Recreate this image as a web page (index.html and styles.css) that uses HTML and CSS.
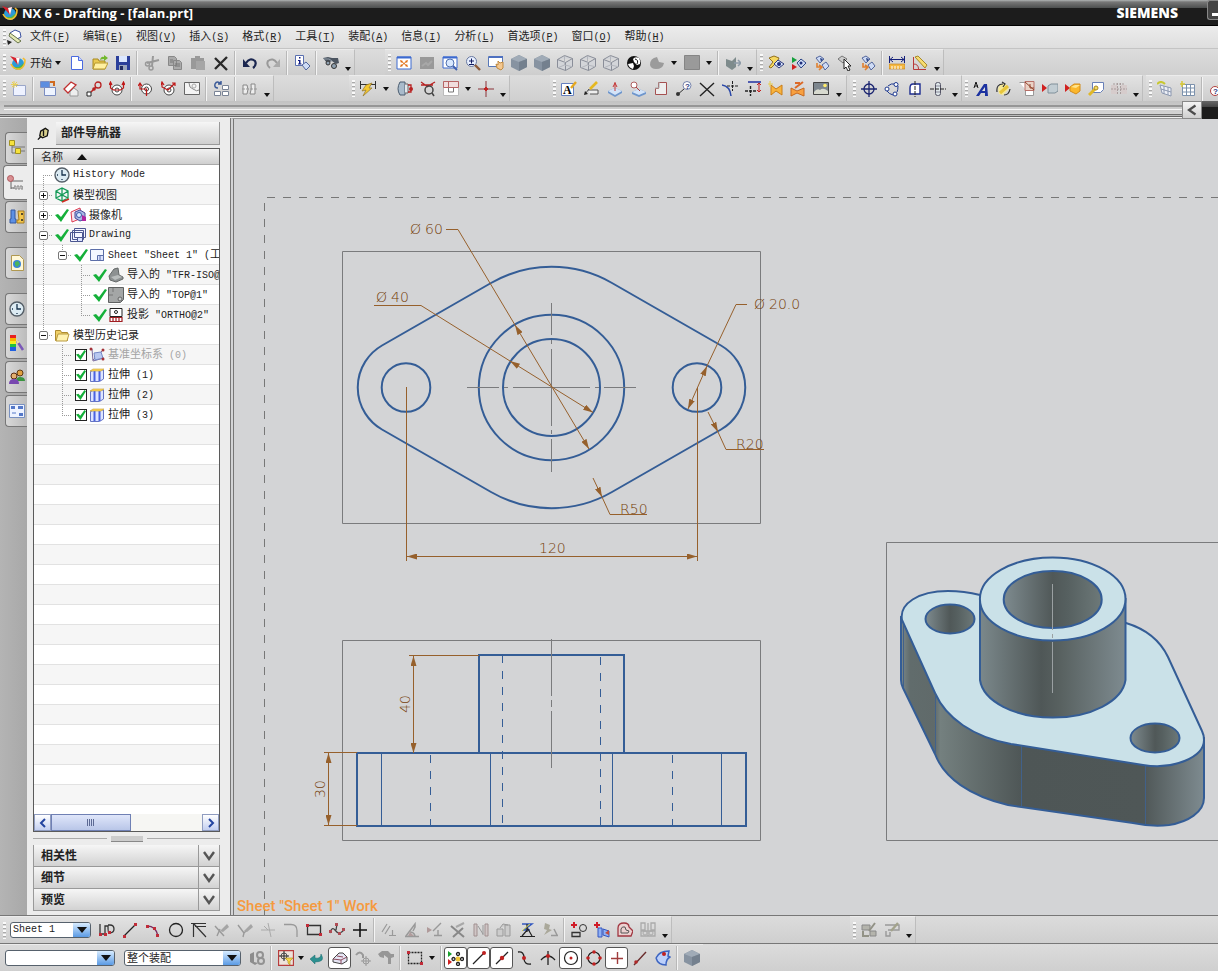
FILE: index.html
```html
<!DOCTYPE html>
<html lang="zh-CN">
<head>
    <meta charset="UTF-8">
    <meta name="viewport" content="width=device-width, initial-scale=1.0">
    <title>NX 6 - Drafting - [falan.prt]</title>
    <link rel="stylesheet" href="styles.css">
</head>
<body>
    <svg class="defs" aria-hidden="true">
        <symbol id="nx" viewBox="0 0 16 16"><circle cx="8" cy="9" r="6" fill="#2c9bd8"/><path d="M3 12q4 4 9 1l2-5-5 4z" fill="#52b848"/><path d="M1 9q3 6 9 5 5-2 5-9l-2-2" fill="none" stroke="#f4bd2c" stroke-width="1.600"/><path d="M0 1l6 2 4-1-2 8z" fill="#d8202c"/><path d="M6 3l4-1-2 8z" fill="#fff"/></symbol>
        <symbol id="cube" viewBox="0 0 16 16"><path d="M0 4l8-4 8 4v8l-8 4-8-4z" fill="#8793a1"/><path d="M0 4l8-4 8 4-8 3z" fill="#a0abb7"/><path d="M8 7l8-3v8l-8 4z" fill="#74808e"/></symbol>
        <symbol id="wire" viewBox="0 0 16 16"><path d="M.5 4.500l7-4 8 3v8l-7 4-8-3zM.5 4.500l8 3 7-4M8.500 7.500v8" fill="#d3d5d9" stroke="#8a8e99"/><path d="M7.500 1v9l-6 2.500M7.500 10l7 1.500" fill="none" stroke="#b3b6bd"/></symbol>
        <symbol id="check" viewBox="0 0 16 16"><path d="M1 8l3-1 3 3 6-8 2 1-8 12z" fill="#15b03a"/></symbol>
        <symbol id="clock" viewBox="0 0 16 16"><circle cx="8" cy="8" r="7" fill="#dcebf3" stroke="#555f68" stroke-width="1.400"/><path d="M8 3v5h4M8 13v-1M3 8h1" fill="none" stroke="#16324c" stroke-width="1.300"/></symbol>
        <symbol id="extrude" viewBox="0 0 16 16"><path d="M1.500 4.500l4-1.500h9v9l-4 2.500h-9z" fill="#dfe5ff" stroke="#6474c4"/><path d="M5.500 4v10M10.500 4v10" stroke="#4a62e0" stroke-width="2"/><path d="M1 4l3-2h11l-3 2z" fill="#ffd95a" stroke="#c8a030" stroke-width=".6"/></symbol>
        <symbol id="gems" viewBox="0 0 16 16"><path d="M2 3l4-2 4 3-4 4zM8 10l4-3 3 4-4 4z" fill="#cfdcf6" stroke="#53669c"/><path d="M6 3l3 1-2 3z" fill="#2b4486"/><path d="M3 8v4h4M5 10l3 2-3 3" fill="none" stroke="#e08030" stroke-width="1.600"/></symbol>
    </svg>

    <header class="titlebar">
        <svg class="icon" viewBox="0 0 16 16"><use href="#nx"/></svg>
        <h1>NX 6 - Drafting - [falan.prt]</h1>
        <span class="brand">SIEMENS</span>
        <button class="minimize" aria-label="最小化"></button>
    </header>

    <nav class="menubar">
        <span class="grip"></span>
        <svg class="icon" viewBox="0 0 16 16"><path d="M3 4l5-3 5 2 1 5-4 2-5-1z" fill="#fff" stroke="#3a50a0"/><path d="M3 4l11 8-3 2-9-7z" fill="#e4e9b4" stroke="#68744a"/><path d="M0 11l5 2-4 3z" fill="#222"/></svg>
        <button>文件<span class="latin">(<u>F</u>)</span></button>
        <button>编辑<span class="latin">(<u>E</u>)</span></button>
        <button>视图<span class="latin">(<u>V</u>)</span></button>
        <button>插入<span class="latin">(<u>S</u>)</span></button>
        <button>格式<span class="latin">(<u>R</u>)</span></button>
        <button>工具<span class="latin">(<u>T</u>)</span></button>
        <button>装配<span class="latin">(<u>A</u>)</span></button>
        <button>信息<span class="latin">(<u>I</u>)</span></button>
        <button>分析<span class="latin">(<u>L</u>)</span></button>
        <button>首选项<span class="latin">(<u>P</u>)</span></button>
        <button>窗口<span class="latin">(<u>O</u>)</span></button>
        <button>帮助<span class="latin">(<u>H</u>)</span></button>
    </nav>

    <div class="toolrow">
        <div class="toolbar">
            <span class="grip"></span>
            <button class="start"><svg class="icon" viewBox="0 0 16 16"><use href="#nx"/></svg>开始<i class="caret"></i></button>
            <button class="tool" aria-label="新建"><svg class="icon" viewBox="0 0 16 16"><path d="M2.500 1.500h7l4 4v9h-11z" fill="#fff" stroke="#4a6ae0"/><path d="M9.500 1.500v4h4" fill="#cdd8ff" stroke="#4a6ae0"/></svg></button>
            <button class="tool" aria-label="打开"><svg class="icon" viewBox="0 0 16 16"><path d="M1 14V4h5l1 2h6v8z" fill="#e8c850" stroke="#a88a20"/><path d="M3 8h13l-3 6H1z" fill="#fff0a0" stroke="#b89a30"/><path d="M8 5q1-4 4-3V0l4 3-4 3V4q-2 0-4 1" fill="#72b82c"/></svg></button>
            <button class="tool" aria-label="保存"><svg class="icon" viewBox="0 0 16 16"><path d="M1 1h14v14H1z" fill="#2b3f9a"/><path d="M4 1h8v6H4z" fill="#dce8ff"/><path d="M4 10h8v5H4z" fill="#9ba6bd"/><path d="M5 11h3v4H5z" fill="#222c60"/></svg></button>
            <span class="sep"></span>
            <button class="tool" aria-label="剪切"><svg class="icon" viewBox="0 0 16 16"><path d="M9 1L8 11M3 8l12-3" stroke="#999" stroke-width="2"/><circle cx="3.500" cy="9" r="2" fill="none" stroke="#999" stroke-width="1.500"/><circle cx="7" cy="13" r="2" fill="none" stroke="#999" stroke-width="1.500"/></svg></button>
            <button class="tool" aria-label="复制"><svg class="icon" viewBox="0 0 16 16"><path d="M1.500 1.500h6l2 2v7h-8zM6.500 5.500h6l2 2v7h-8z" fill="#aaa" stroke="#888"/><path d="M8 9h5M8 11h5M3 5h3M3 7h3" stroke="#777"/></svg></button>
            <button class="tool" aria-label="粘贴"><svg class="icon" viewBox="0 0 16 16"><path d="M1 3h13v11H1zM5 1h5v3H5z" fill="#999"/><path d="M6 6h9v9H6z" fill="#a6a6a6"/></svg></button>
            <button class="tool" aria-label="删除"><svg class="icon" viewBox="0 0 16 16"><path d="M2 3l12 12M14 2L2 14" stroke="#2a2a2a" stroke-width="2.400"/></svg></button>
            <span class="sep"></span>
            <button class="tool" aria-label="撤销"><svg class="icon" viewBox="0 0 16 16"><path d="M4 8q4-6 9-2 2 4-2 7" fill="none" stroke="#1b2750" stroke-width="2.200"/><path d="M1 4v8h7z" fill="#1b2750"/></svg></button>
            <button class="tool" aria-label="重做"><svg class="icon" viewBox="0 0 16 16"><path d="M12 8Q8 2 3 6q-2 4 2 7" fill="none" stroke="#999" stroke-width="2"/><path d="M15 4v8H8z" fill="#aaa"/></svg></button>
            <span class="sep"></span>
            <button class="tool" aria-label="信息"><svg class="icon" viewBox="0 0 16 16"><path d="M1.500.5h8v10h-8z" fill="#fff" stroke="#5a70b0"/><path d="M5 2h1.500v1.500H5zM4 5h2.500v3.500h1v1H4v-1h1V6H4z" fill="#111a80"/><path d="M8 10l4-3 4 4-4 4z" fill="#cfdcf6" stroke="#53669c"/></svg></button>
            <span class="sep"></span>
            <button class="tool" aria-label="查找"><svg class="icon" viewBox="0 0 16 16"><path d="M0 3l5-1 4 1 6 0 1 5-3 1-4-3-5 2z" fill="#4c5561"/><path d="M1 4l5 0 3 2" fill="none" stroke="#93a0ac"/><circle cx="5" cy="8" r="2" fill="#8fa0b0" stroke="#333"/><circle cx="11" cy="11" r="2.500" fill="#8fa0b0" stroke="#333"/></svg></button>
            <button class="drop more" aria-label="更多"></button>
        </div>
        <div class="toolbar gap-m">
            <span class="grip"></span>
            <button class="tool" aria-label="适合窗口"><svg class="icon" viewBox="0 0 16 16"><path d="M1 2h14v12H1z" fill="#fff" stroke="#3c6ad0"/><path d="M1 1.500h14v2H1z" fill="#3c6ad0"/><path d="M4 5l3 1-2 2zM12 5l-3 1 2 2zM4 12l3-1-2-2zM12 12l-3-1 2-2z" fill="#e06c10"/><path d="M5 6l6 5M11 6l-6 5" stroke="#e06c10"/></svg></button>
            <button class="tool" aria-label="缩放选定"><svg class="icon" viewBox="0 0 16 16"><path d="M1 2h14v12H1z" fill="#999"/><path d="M3 11l4-3 2 2 4-4" stroke="#a8a8a8" fill="none" stroke-width="2"/></svg></button>
            <button class="tool" aria-label="缩放窗口"><svg class="icon" viewBox="0 0 16 16"><path d="M1 2h14v11H1z" fill="#fff" stroke="#3c6ad0"/><path d="M1 1.500h14v2H1z" fill="#3c6ad0"/><circle cx="8" cy="8" r="4" fill="#d8e8ff" stroke="#5070b0"/><path d="M11 11l4 4" stroke="#4060b0" stroke-width="2"/></svg></button>
            <button class="tool" aria-label="放大缩小"><svg class="icon" viewBox="0 0 16 16"><circle cx="6.500" cy="6.500" r="5" fill="#e8f0ff" stroke="#6878a0"/><path d="M4 6h5M6.500 3.500v5M4 9.500h5" stroke="#101a60"/><path d="M10 10l5 5" stroke="#8c5a3a" stroke-width="2.400"/></svg></button>
            <button class="tool" aria-label="平移"><svg class="icon" viewBox="0 0 16 16"><path d="M.5 1.500h14v10H.5z" fill="#fff" stroke="#5878b8"/><path d="M1 1h14v2H1z" fill="#4e70c0"/><path d="M8 9l2 1V6l2 2 3-1v6l-2 2-4-2z" fill="#f4c890" stroke="#c08a40"/></svg></button>
            <button class="tool" aria-label="带边着色"><svg class="icon" viewBox="0 0 16 16"><use href="#cube"/></svg></button>
            <button class="tool" aria-label="着色"><svg class="icon" viewBox="0 0 16 16"><use href="#cube"/></svg></button>
            <button class="tool" aria-label="线框"><svg class="icon" viewBox="0 0 16 16"><use href="#wire"/></svg></button>
            <button class="tool" aria-label="隐藏边"><svg class="icon" viewBox="0 0 16 16"><use href="#wire"/></svg></button>
            <button class="tool" aria-label="静态线框"><svg class="icon" viewBox="0 0 16 16"><use href="#wire"/></svg></button>
            <button class="tool" aria-label="面分析"><svg class="icon" viewBox="0 0 16 16"><circle cx="8" cy="8" r="7" fill="#111"/><path d="M7 4q2-3 6-1 2 3 1 6l-3 1-3-3zM2 9l5-1 1 3-1 3q-4-1-5-5" fill="#fff"/><path d="M9 4q4 1 2 5" fill="none" stroke="#111"/></svg></button>
            <button class="tool" aria-label="局部着色"><svg class="icon" viewBox="0 0 16 16"><path d="M1 10q0-7 7-8l2 5 5 1q-1 6-8 6-5 0-6-4" fill="#9b9b9b"/></svg></button>
            <button class="drop" aria-label="展开"></button>
            <button class="tool" aria-label="背景"><svg class="icon" viewBox="0 0 16 16"><path d="M.5.500h15v14H.5z" fill="#9a9a9a" stroke="#858585"/></svg></button>
            <button class="drop" aria-label="展开"></button>
            <span class="sep"></span>
            <button class="tool" aria-label="剪切截面"><svg class="icon" viewBox="0 0 16 16"><path d="M1 4l6 2 4-4v10l-4 3-6-4z" fill="#7e8b8c"/><path d="M9 8h6M13 5l3 3-3 3" fill="none" stroke="#8d9ba8" stroke-width="1.500"/></svg></button>
            <button class="drop more" aria-label="更多"></button>
        </div>
        <div class="toolbar">
            <span class="grip"></span>
            <button class="tool" aria-label="显示"><svg class="icon" viewBox="0 0 16 16"><path d="M1 3l5-2 5 2-2 4-6 6-2-1 4-5z" fill="#f6d860" stroke="#92701c"/><path d="M6 9l4-4 6 4-5 4z" fill="#dce8ff" stroke="#2c3878"/><circle cx="11" cy="9" r="2" fill="#20307c"/></svg></button>
            <button class="tool" aria-label="显示和隐藏"><svg class="icon" viewBox="0 0 16 16"><path d="M1 2l5 3-5 3z" fill="#14a03c"/><path d="M1 9l5 3-5 3z" fill="#d02020"/><path d="M6 8l4-4 5 4-5 5z" fill="#cfdcf6" stroke="#2b4486"/><circle cx="10" cy="8" r="1.500" fill="#20307c"/></svg></button>
            <button class="tool" aria-label="隐藏"><svg class="icon" viewBox="0 0 16 16"><use href="#gems"/></svg></button>
            <button class="tool" aria-label="选择对象"><svg class="icon" viewBox="0 0 16 16"><path d="M1 4l4-3 5 3-4 4z" fill="#ccc" stroke="#777"/><path d="M7 4v10l2-2 2 4 2-1-2-4h3z" fill="#fff" stroke="#222"/></svg></button>
            <button class="tool" aria-label="反转显示"><svg class="icon" viewBox="0 0 16 16"><use href="#gems"/></svg></button>
            <span class="sep"></span>
            <button class="tool" aria-label="测量距离"><svg class="icon" viewBox="0 0 16 16"><path d="M.5 1v7M15.500 1v7M1 4.500h14M4 2L1 4.500 4 7M12 2l3 2.500L12 7" fill="none" stroke="#15207a"/><path d="M0 9h16v5H0z" fill="#f5b840" stroke="#b87818" stroke-width=".6"/><path d="M3 11v3M6 11v3M9 11v3M12 11v3" stroke="#fff"/></svg></button>
            <button class="tool" aria-label="测量角度"><svg class="icon" viewBox="0 0 16 16"><path d="M1.500 2v12.500H14M1.500 9q5 0 5 5" fill="none" stroke="#b83a3a"/><path d="M3 2l3-1 9 9-2 3z" fill="#f7dc70" stroke="#a88a28"/></svg></button>
            <button class="drop more" aria-label="更多"></button>
        </div>
    </div>

    <div class="toolrow">
        <div class="toolbar">
            <span class="grip"></span>
            <button class="tool" aria-label="新建图纸页"><svg class="icon" viewBox="0 0 16 16"><path d="M2.500 4.500h12v10h-12z" fill="#eef2ff" stroke="#9aa6c8"/><path d="M3 0v7M0 3.500h7M1 1l5 5M6 1L1 6" stroke="#e8cf58"/></svg></button>
            <span class="sep"></span>
            <button class="tool" aria-label="基本视图"><svg class="icon" viewBox="0 0 16 16"><path d="M.5.500h9v6h-9z" fill="#5d8ee0" stroke="#8090c0"/><path d="M10 1h4v4" fill="none" stroke="#d06a20" stroke-width="2"/><path d="M4.500 6.500h11v8h-11z" fill="#eef4ff" stroke="#7a8cc0"/></svg></button>
            <button class="tool" aria-label="投影视图"><svg class="icon" viewBox="0 0 16 16"><path d="M1 8l7-7 5 3-8 8z" fill="#fff" stroke="#c03030" stroke-width="1.300"/><path d="M7 11l4-4 4 3v5H7z" fill="#eee" stroke="#999"/></svg></button>
            <button class="tool" aria-label="局部放大图"><svg class="icon" viewBox="0 0 16 16"><circle cx="12" cy="4" r="3" fill="none" stroke="#b82020" stroke-width="1.300"/><path d="M10 6l-5 5" stroke="#b82020" stroke-width="1.500"/><circle cx="8" cy="8" r="1.800" fill="#b82020"/><path d="M1 11h4v4H1z" fill="#fff" stroke="#222"/></svg></button>
            <button class="tool" aria-label="剖视图"><svg class="icon" viewBox="0 0 16 16"><circle cx="8" cy="9" r="5" fill="#fff" stroke="#444"/><circle cx="8" cy="9" r="2" fill="none" stroke="#444"/><path d="M1.500 2v5l3 2h7l3-2V2M0 4l1.500-3L3 4M13 4l1.500-3L16 4" fill="none" stroke="#c01818" stroke-width="1.200"/></svg></button>
            <span class="sep"></span>
            <button class="tool" aria-label="半剖视图"><svg class="icon" viewBox="0 0 16 16"><circle cx="8.500" cy="8" r="5" fill="#fff" stroke="#444"/><circle cx="8.500" cy="8" r="2" fill="none" stroke="#444"/><path d="M2 2v6h6.500v7M0 5l2-3 2 3" fill="none" stroke="#c01818" stroke-width="1.200"/></svg></button>
            <button class="tool" aria-label="旋转剖视图"><svg class="icon" viewBox="0 0 16 16"><circle cx="8" cy="9" r="5" fill="#fff" stroke="#444"/><circle cx="8" cy="9" r="2" fill="none" stroke="#444"/><path d="M1 2v4l6 3 7-7M11 2h3v3M0 4l1-3 2 3" fill="none" stroke="#c01818" stroke-width="1.200"/></svg></button>
            <button class="tool" aria-label="局部剖视图"><svg class="icon" viewBox="0 0 16 16"><path d="M.5 1.500h15v12H.5z" fill="#f4f4f4" stroke="#666"/><path d="M5 2q0 5 4 6 4 3 6 1" fill="none" stroke="#888"/><circle cx="10" cy="5" r="2" fill="none" stroke="#aaa"/></svg></button>
            <span class="sep"></span>
            <button class="tool" aria-label="更新视图"><svg class="icon" viewBox="0 0 16 16"><path d="M8 3q-4-4-6 0-1 4 3 4M8 0v3H5" fill="none" stroke="#3b5a98" stroke-width="1.500"/><path d="M9.500 4.500h6v4h-6zM1.500 10.500h6v4h-6zM9.500 10.500h6v4h-6z" fill="#fff" stroke="#7a8496"/></svg></button>
            <span class="sep"></span>
            <button class="tool" aria-label="断开视图"><svg class="icon" viewBox="0 0 16 16"><path d="M1 4h4q2 4 0 9H1zM9 3h4v10H8q2-5 1-10" fill="#eee" stroke="#888"/><path d="M0 8h16" stroke="#999" stroke-dasharray="3 1"/></svg></button>
            <button class="drop more" aria-label="更多"></button>
        </div>
        <div class="toolbar gap-l">
            <span class="grip"></span>
            <button class="tool" aria-label="自动判断尺寸"><svg class="icon" viewBox="0 0 16 16"><path d="M.5 0v8M15.500 0v8M1 3.500h14" stroke="#333"/><path d="M6 4l6-2-3 5 3 0-9 8 3-6-4 1z" fill="#f4c830" stroke="#92742a" stroke-width=".7"/></svg></button>
            <button class="drop wide" aria-label="展开"></button>
            <button class="tool" aria-label="基准特征"><svg class="icon" viewBox="0 0 16 16"><path d="M3 1h5v13H3q-4-6 0-13" fill="#a9bbcb" stroke="#4b5d70"/><path d="M8 3h3v9H8" fill="#e4e8ec" stroke="#666"/><path d="M11 4h3v7h-3" fill="none" stroke="#b82222" stroke-width="1.300"/><circle cx="14" cy="8" r="2" fill="#b82222"/></svg></button>
            <button class="tool" aria-label="形位公差"><svg class="icon" viewBox="0 0 16 16"><path d="M1 1l7 5M15 1L8 5M1 4h12" stroke="#b82222" stroke-width="1.300"/><circle cx="9" cy="9" r="4" fill="none" stroke="#444" stroke-width="1.500"/><path d="M12 12l2 3" stroke="#444" stroke-width="1.500"/></svg></button>
            <button class="tool" aria-label="布局"><svg class="icon" viewBox="0 0 16 16"><path d="M.5.500h15v14H.5z" fill="#fff" stroke="#bbb"/><path d="M.5.500h15v6H.5zM5.500 0v6" fill="#f0dddd" stroke="#b76464"/><path d="M5.500 7v4h5V7" fill="none" stroke="#777"/></svg></button>
            <button class="drop" aria-label="展开"></button>
            <button class="tool" aria-label="中心标记"><svg class="icon" viewBox="0 0 16 16"><path d="M0 8h16M8 0v16" stroke="#8b3238"/><path d="M6 8h4M8 6v4" stroke="#c02424" stroke-width="2"/></svg></button>
            <button class="drop more" aria-label="更多"></button>
        </div>
        <div class="toolbar gap-m2">
            <span class="grip"></span>
            <button class="tool" aria-label="注释"><svg class="icon" viewBox="0 0 16 16"><path d="M.5 2.500h12v12H.5z" fill="#fff" stroke="#6580c0"/><text x="2" y="13" class="glyph">A</text><path d="M10 7l5-6" stroke="#e5a820" stroke-width="2.400"/></svg></button>
            <button class="tool" aria-label="编辑注释"><svg class="icon" viewBox="0 0 16 16"><path d="M1 13l4-5M4 9h10v4H6" fill="#eee" stroke="#555"/><path d="M0 14l1-4 3 3z" fill="#222"/><path d="M6 8l7-7" stroke="#e5b820" stroke-width="2.600"/></svg></button>
            <button class="tool" aria-label="基准符号"><svg class="icon" viewBox="0 0 16 16"><path d="M1 10l7-3 7 3v2l-7 4-7-4z" fill="#6f96cc"/><path d="M1 10l7-3 7 3-7 4z" fill="#d4e4f8"/><path d="M8 10V1M6 6l2-4 2 4" fill="none" stroke="#c43434"/></svg></button>
            <button class="tool" aria-label="表面符号"><svg class="icon" viewBox="0 0 16 16"><path d="M2 11l7-3 7 3v2l-7 3-7-3z" fill="#6f96cc"/><path d="M2 11l7-3 7 3-7 3z" fill="#d4e4f8"/><circle cx="4" cy="4" r="3" fill="#fff" stroke="#b06060"/><path d="M6 6l4 4" stroke="#b04040"/></svg></button>
            <button class="tool" aria-label="焊接符号"><svg class="icon" viewBox="0 0 16 16"><path d="M5.500 1.500h8v12h-11v-6h3z" fill="#eee" stroke="#a55050"/><path d="M2 7h4V1" fill="none" stroke="#aaa"/></svg></button>
            <button class="tool" aria-label="标识符号"><svg class="icon" viewBox="0 0 16 16"><circle cx="11" cy="4.500" r="4" fill="#fff" stroke="#7482ac"/><text x="9" y="8" class="glyph-s">?</text><path d="M8 8l-7 6" stroke="#333"/><circle cx="2" cy="13" r="2" fill="#333"/></svg></button>
            <button class="tool" aria-label="目标点"><svg class="icon" viewBox="0 0 16 16"><path d="M1 2l14 13M15 2L1 15" stroke="#222" stroke-width="1.400"/></svg></button>
            <button class="tool" aria-label="相交符号"><svg class="icon" viewBox="0 0 16 16"><path d="M0 4q8 1 9 11" fill="none" stroke="#2a48a8" stroke-width="1.500"/><path d="M5 5h11M10.500 0v10" stroke="#222" stroke-dasharray="3 1"/></svg></button>
            <button class="tool" aria-label="偏置中心点"><svg class="icon" viewBox="0 0 16 16"><path d="M3 1h13" stroke="#2030a0" stroke-width="1.500"/><path d="M14 2v9M12 4l2-2 2 2M12 9l2 2 2-2" fill="none" stroke="#c22020"/><path d="M0 10h12M5.500 5v10" stroke="#222" stroke-width="1.400" stroke-dasharray="3 1"/></svg></button>
            <button class="tool" aria-label="装配剖切"><svg class="icon" viewBox="0 0 16 16"><path d="M3 4l5 4 6-4v10l-6-4-5 4z" fill="#f8b33c" stroke="#c97c18"/><path d="M2 0v6M0 3h5" stroke="#e8ce50"/></svg></button>
            <button class="tool narrow" aria-label="剖切编辑"><svg class="icon" viewBox="0 0 16 16"><path d="M1 7l6 3 7-3v8l-7-3-6 3z" fill="#f8a040" stroke="#c56820"/><path d="M5 7l8-6M5 2h5" stroke="#dc6a28" stroke-width="2"/></svg></button>
            <button class="tool" aria-label="图像"><svg class="icon" viewBox="0 0 16 16"><path d="M.5 1.500h15v12H.5z" fill="#7d868e" stroke="#444"/><path d="M1 11q3-4 6-2 3-3 8 1v3H1z" fill="#d8dad0"/><circle cx="12" cy="4.500" r="1.800" fill="#ffec6a"/></svg></button>
            <button class="drop more wide" aria-label="更多"></button>
        </div>
        <div class="toolbar gap-s">
            <span class="grip"></span>
            <button class="tool" aria-label="中心标记"><svg class="icon" viewBox="0 0 16 16"><circle cx="8" cy="8" r="5" fill="none" stroke="#1a2470" stroke-width="1.300"/><path d="M0 8h16M8 0v16" stroke="#1a2470" stroke-width="1.300"/></svg></button>
            <button class="tool" aria-label="螺栓圆"><svg class="icon" viewBox="0 0 16 16"><path d="M4 5q3-3 7-2M3 10q2 3 6 4M14 5q0 4-1 6" fill="none" stroke="#1c3890"/><circle cx="12" cy="3.500" r="2" fill="#fff" stroke="#1c3890"/><circle cx="3" cy="8" r="2" fill="#fff" stroke="#1c3890"/><circle cx="11" cy="13" r="2" fill="#fff" stroke="#1c3890"/></svg></button>
            <button class="tool" aria-label="对称中心线"><svg class="icon" viewBox="0 0 16 16"><path d="M8 3H6Q3 3 3 7v6h10V3z" fill="#fff" stroke="#1c2c90" stroke-width="1.400"/><path d="M8 0v16" stroke="#222" stroke-dasharray="4 1"/></svg></button>
            <button class="tool" aria-label="圆柱中心线"><svg class="icon" viewBox="0 0 16 16"><rect x="5.500" y="1.500" width="5" height="13" rx="2" fill="#dde5e8" stroke="#556"/><path d="M6 5h4M6 11h4" stroke="#889"/><path d="M0 8h16" stroke="#222" stroke-dasharray="4 1"/></svg></button>
            <button class="drop more" aria-label="更多"></button>
        </div>
        <div class="toolbar">
            <span class="grip"></span>
            <button class="tool" aria-label="编辑样式"><svg class="icon" viewBox="0 0 16 16"><path d="M1 7l2-6 2 6M2 5h3" fill="none" stroke="#111"/><path d="M3 15L11 3h3l1 12h-3v-3H8l-2 3z" fill="#1c32a0"/><path d="M9 10h3V6z" fill="#e0e0e0"/></svg></button>
            <button class="tool" aria-label="编辑注释"><svg class="icon" viewBox="0 0 16 16"><path d="M2 8q2-6 7-5l4 5-6 6-4-1z" fill="#f5e998"/><path d="M4 12l8-7" stroke="#e8c63c" stroke-width="3"/><path d="M1 11q-1-8 6-8M6 1l3 2-2 3M14 8q-1 6-6 6" fill="none" stroke="#333" stroke-width="1.200"/></svg></button>
            <button class="tool" aria-label="移动视图"><svg class="icon" viewBox="0 0 16 16"><path d="M.5 1.500h6v13h8v-6h-8" fill="#fff" stroke="#999"/><path d="M6 .5h9v9H6z" fill="#ead2c6" stroke="#b87068"/><path d="M6 1l9 8M11 3v4h4" fill="none" stroke="#92442c"/></svg></button>
            <button class="tool" aria-label="视图剖切"><svg class="icon" viewBox="0 0 16 16"><path d="M0 3l5 4-5 4z" fill="#d02020"/><path d="M6 5l3-2h7v7l-3 2H6z" fill="#c2cdd3" stroke="#80909a"/></svg></button>
            <button class="tool" aria-label="剖切组件"><svg class="icon" viewBox="0 0 16 16"><path d="M0 3l5 4-5 4z" fill="#d02020"/><path d="M5 6l4-3h6v7l-4 3-6-3z" fill="#fbb72c" stroke="#d28b1a"/><path d="M6 6l4-2h5l-4 3z" fill="#ffe38a"/></svg></button>
            <button class="tool" aria-label="关联编辑"><svg class="icon" viewBox="0 0 16 16"><path d="M4.500 1.500h11v7l-3 3h-8z" fill="#fff" stroke="#6880b8"/><path d="M1 14l6-6" stroke="#e0b828" stroke-width="3"/><circle cx="8" cy="7" r="2" fill="#f5dc60" stroke="#a88624"/></svg></button>
            <button class="tool" aria-label="抑制视图"><svg class="icon" viewBox="0 0 16 16"><path d="M0 4h6v9H0zM10 4h6v9h-6z" fill="#d6cccc"/><path d="M6.500 2v12M9.500 2v12M2 3h12M0 8h16" stroke="#a89c9c" stroke-dasharray="2 1"/></svg></button>
            <button class="drop more" aria-label="更多"></button>
        </div>
        <div class="toolbar gap-s">
            <span class="grip"></span>
            <button class="tool" aria-label="表格注释"><svg class="icon" viewBox="0 0 16 16"><path d="M3 4l11 3v8L5 12zM4 8l10 3M7 5v8M11 6v8" fill="#edf0f7" stroke="#8c98b0"/><path d="M0 3q4-4 8 0" fill="none" stroke="#c8c830" stroke-width="2"/></svg></button>
            <button class="tool" aria-label="零件明细表"><svg class="icon" viewBox="0 0 16 16"><path d="M2.500 3.500h12v11h-12zM2 7h12M2 11h12M6.500 3v11M10.500 3v11" fill="#fff" stroke="#7b91ac"/><path d="M2 0v6M0 3h5" stroke="#d8c838" stroke-width="1.500"/></svg></button>
            <span class="sep"></span>
            <button class="tool" aria-label="自动符号标注"><svg class="icon" viewBox="0 0 16 16"><circle cx="6" cy="10" r="4.500" fill="#fff" stroke="#b04040"/><text x="4" y="13" class="glyph-s">?</text><path d="M8 5l6-4v5z" fill="#e0b030"/></svg></button>
        </div>
    </div>

    <div class="dockstrip">
        <span class="rail"></span>
        <button class="collapse" aria-label="收起"><svg width="12" height="12" viewBox="0 0 12 12"><path d="M9.500 1.500L3 6l6.500 4.500" fill="none" stroke="#4c4c4c" stroke-width="2.200"/></svg></button>
        <span class="strip-end"></span>
    </div>

    <main class="workspace">
        <nav class="resources">
            <button class="tab" aria-label="装配导航器"><svg class="icon" viewBox="0 0 16 16"><path d="M3 5v8h4M3 7h13M12 11h4" fill="none" stroke="#777"/><path d="M.5.500h5v5h-5zM6.500 8.500h5v5h-5z" fill="#f6e23c" stroke="#a29220"/></svg></button>
            <button class="tab active" aria-label="部件导航器"><svg class="icon" viewBox="0 0 16 16"><path d="M4 5v9M4 6h12M4 13h4" fill="none" stroke="#666"/><circle cx="3.500" cy="3.500" r="3" fill="#d88f92" stroke="#b05a5e"/><path d="M7 11h9v3H7z" fill="#bbb" stroke="#888" stroke-dasharray="2 1"/></svg></button>
            <button class="tab" aria-label="重用库"><svg class="icon" viewBox="0 0 16 16"><path d="M2 1h4v9h1v4H1v-4h1z" fill="#5d90e4" stroke="#3459a0"/><path d="M9 2h6v12H8v-3h2z" fill="#f3c64c" stroke="#a67c20"/><circle cx="13" cy="5" r="1" fill="#222"/><circle cx="13" cy="11" r="1" fill="#222"/></svg></button>
            <button class="tab spaced" aria-label="浏览器"><svg class="icon" viewBox="0 0 16 16"><path d="M2.500.500h8l4 4v11h-12z" fill="#fff8d8" stroke="#b09850"/><circle cx="8" cy="9" r="4" fill="#3b84d8"/><path d="M6 7l3-1 2 3-3 3-2-2z" fill="#4cb35a"/></svg></button>
            <button class="tab spaced" aria-label="历史记录"><svg class="icon" viewBox="0 0 16 16"><use href="#clock"/></svg></button>
            <button class="tab" aria-label="系统材料"><svg class="icon" viewBox="0 0 16 16"><path d="M1 0h6v3H1z" fill="#e82020"/><path d="M1 3h6v3H1z" fill="#f8b400"/><path d="M1 6h6v3H1z" fill="#f4f020"/><path d="M1 9h6v3H1z" fill="#20c040"/><path d="M1 12h6v4H1z" fill="#2060e0"/><path d="M8 6l6 9" stroke="#7a58b8" stroke-width="2.500"/><path d="M7 4l4 3-3 2z" fill="#ead9a0"/></svg></button>
            <button class="tab" aria-label="角色"><svg class="icon" viewBox="0 0 16 16"><circle cx="11" cy="4" r="3" fill="#e0a040" stroke="#5d3c14"/><path d="M7 12q0-4 4-4 5 0 5 4z" fill="#3a9440"/><circle cx="5" cy="7" r="3" fill="#e4b070" stroke="#5a2c10"/><path d="M0 15q0-5 5-5t5 5z" fill="#7848b0"/></svg></button>
            <button class="tab" aria-label="系统可视化"><svg class="icon" viewBox="0 0 16 16"><path d="M.5 1.500h15v13H.5z" fill="#eef3ff" stroke="#7890c0"/><path d="M2 3h4v3H2zM9 3h5v3H9zM10 10h4v3h-4z" fill="#5478c8"/><path d="M3 10h4" stroke="#5478c8"/></svg></button>
        </nav>

        <aside class="panel">
            <div class="panel-head">
                <svg class="icon" viewBox="0 0 16 16"><path d="M5 5l5-3 3 2-1 6-5 2-3-2z" fill="#d8cf8c" stroke="#111" stroke-width="1.400"/><path d="M8 4v6M5 11l-3 3" stroke="#111" stroke-width="1.400"/></svg>
                <h2>部件导航器</h2>
            </div>
            <div class="tree">
                <div class="tree-head">名称<i class="sort"></i></div>
                <ul class="rows">
                    <li><span class="cell tee first"></span><svg class="icon" viewBox="0 0 16 16"><use href="#clock"/></svg><span class="name latin">History Mode</span></li>
                    <li><span class="cell tee"><button class="expander plus" aria-label="展开"></button></span><svg class="icon" viewBox="0 0 16 16"><path d="M2 4l6-3 6 3v7l-6 3-6-3zM2 4l6 4 6-4M8 1v13M2 11l6-3 6 3" fill="none" stroke="#159a58" stroke-width="1.300"/><path d="M8 15l7-3" stroke="#d02a20" stroke-width="1.500"/></svg><span class="name">模型视图</span></li>
                    <li><span class="cell tee"><button class="expander plus" aria-label="展开"></button></span><svg class="icon" viewBox="0 0 16 16"><use href="#check"/></svg><svg class="icon" viewBox="0 0 16 16"><path d="M1 5l9-4 2 10-10 4z" fill="#fbe6ee" stroke="#dc3a50"/><path d="M5 5l5-2 5 3v6l-5 2-5-3z" fill="#a8b8e4" stroke="#4a4a98"/><circle cx="9" cy="8" r="2.500" fill="#dde8ff" stroke="#3a5aa8"/><path d="M12 8l4 2v4h-4z" fill="#b028a0"/></svg><span class="name">摄像机</span></li>
                    <li><span class="cell tee"><button class="expander" aria-label="折叠"></button></span><svg class="icon" viewBox="0 0 16 16"><use href="#check"/></svg><svg class="icon" viewBox="0 0 16 16"><path d="M4.500 1.500h11v9h-11zM2.500 3.500h11v9h-11zM.5 5.500h12v9H.5z" fill="#f2f4ff" stroke="#4a5590"/><path d="M7.500 10.500h5v4h-5z" fill="#dbe2ff" stroke="#4a5590"/></svg><span class="name latin">Drawing</span></li>
                    <li><span class="cell line"></span><span class="cell elbow"><button class="expander" aria-label="折叠"></button></span><svg class="icon" viewBox="0 0 16 16"><use href="#check"/></svg><svg class="icon" viewBox="0 0 16 16"><path d="M1.500 2.500h13v11h-13z" fill="#f4f6ff" stroke="#5c6ea8"/><path d="M8.500 8.500h6v5h-6zM11 8v5" fill="#dbe2ff" stroke="#5c6ea8"/></svg><span class="name latin">Sheet "Sheet 1" (<span class="han">工</span></span></li>
                    <li><span class="cell line"></span><span class="cell"></span><span class="cell tee"></span><svg class="icon" viewBox="0 0 16 16"><use href="#check"/></svg><svg class="icon" viewBox="0 0 16 16"><path d="M1 9l5-7 4-1 1 7 4 2v2l-7 3-6-2z" fill="#8d9192" stroke="#656969"/><path d="M3 10l7-2 4 2-7 3z" fill="#b9bdbd"/></svg><span class="name">导入的<span class="latin"> "TFR-ISO@</span></span></li>
                    <li><span class="cell line"></span><span class="cell"></span><span class="cell tee"></span><svg class="icon" viewBox="0 0 16 16"><use href="#check"/></svg><svg class="icon" viewBox="0 0 16 16"><path d="M.5.500h15v12l-3 3H.5z" fill="#a4a6a6" stroke="#5f6161"/><path d="M1 8h4M5 1v4" stroke="#777"/><circle cx="12" cy="12" r="2" fill="#c8caca" stroke="#666"/></svg><span class="name">导入的<span class="latin"> "TOP@1"</span></span></li>
                    <li><span class="cell line"></span><span class="cell"></span><span class="cell elbow"></span><svg class="icon" viewBox="0 0 16 16"><use href="#check"/></svg><svg class="icon" viewBox="0 0 16 16"><path d="M2 1.500h12v8H2z" fill="#fff" stroke="#222"/><circle cx="8" cy="5" r="1.500" fill="none" stroke="#222"/><path d="M2 10.500h12v4H2zM5 10v4M8 10v4M11 10v4" fill="#fff" stroke="#a01c20" stroke-width="1.200"/></svg><span class="name">投影<span class="latin"> "ORTHO@2"</span></span></li>
                    <li><span class="cell elbow"><button class="expander" aria-label="折叠"></button></span><svg class="icon" viewBox="0 0 16 16"><path d="M1.500 13.500v-10h5l1 2h6v8z" fill="#f0d068" stroke="#ae8c30"/><path d="M4 7h11l-2 7H2z" fill="#fff2b0" stroke="#b89a40"/></svg><span class="name">模型历史记录</span></li>
                    <li><span class="cell"></span><span class="cell tee"></span><input type="checkbox" aria-label="基准坐标系" checked><svg class="icon" viewBox="0 0 16 16"><path d="M3 2l1 12 11-3M4 13L14 3" fill="none" stroke="#7a6a9c"/><path d="M5 6l7-1 2 6-8 2z" fill="#b9c8f0" stroke="#7488c8"/><circle cx="2" cy="2" r="1.500" fill="#a43238"/><circle cx="14" cy="3" r="1.500" fill="#a43238"/><circle cx="14" cy="12" r="1.500" fill="#a43238"/></svg><span class="name faded">基准坐标系<span class="latin"> (0)</span></span></li>
                    <li><span class="cell"></span><span class="cell tee"></span><input type="checkbox" aria-label="拉伸 (1)" checked><svg class="icon" viewBox="0 0 16 16"><use href="#extrude"/></svg><span class="name">拉伸<span class="latin"> (1)</span></span></li>
                    <li><span class="cell"></span><span class="cell tee"></span><input type="checkbox" aria-label="拉伸 (2)" checked><svg class="icon" viewBox="0 0 16 16"><use href="#extrude"/></svg><span class="name">拉伸<span class="latin"> (2)</span></span></li>
                    <li><span class="cell"></span><span class="cell elbow"></span><input type="checkbox" aria-label="拉伸 (3)" checked><svg class="icon" viewBox="0 0 16 16"><use href="#extrude"/></svg><span class="name">拉伸<span class="latin"> (3)</span></span></li>
                </ul>
                <div class="scrollbar">
                    <button aria-label="向左"><svg width="8" height="10" viewBox="0 0 8 10"><path d="M6 1L2 5l4 4" fill="none" stroke="#2344a0" stroke-width="2"/></svg></button>
                    <span class="thumb"><i></i></span>
                    <button aria-label="向右"><svg width="8" height="10" viewBox="0 0 8 10"><path d="M2 1l4 4-4 4" fill="none" stroke="#2344a0" stroke-width="2"/></svg></button>
                </div>
            </div>
            <div class="splitter"><span></span></div>
            <button class="section">相关性<span class="chevron"><svg width="12" height="10" viewBox="0 0 12 10"><path d="M1 1l5 7 5-7" fill="none" stroke="#555" stroke-width="2.400"/></svg></span></button>
            <button class="section">细节<span class="chevron"><svg width="12" height="10" viewBox="0 0 12 10"><path d="M1 1l5 7 5-7" fill="none" stroke="#555" stroke-width="2.400"/></svg></span></button>
            <button class="section">预览<span class="chevron"><svg width="12" height="10" viewBox="0 0 12 10"><path d="M1 1l5 7 5-7" fill="none" stroke="#555" stroke-width="2.400"/></svg></span></button>
        </aside>

        <section class="canvas">
            <svg class="drawing">
                <defs>
                    <marker id="arrow" viewBox="0 0 10 6" refX="10" refY="3" markerWidth="10" markerHeight="6" markerUnits="userSpaceOnUse" orient="auto-start-reverse"><path d="M0 0l10 3-10 3z" fill="#96602c"/></marker>
                    <linearGradient id="boss"><stop offset="0" stop-color="#7b888b"/><stop offset=".42" stop-color="#4f5757"/><stop offset=".55" stop-color="#586160"/><stop offset="1" stop-color="#7e8b90"/></linearGradient>
                    <linearGradient id="bore"><stop offset="0" stop-color="#7e8b8f"/><stop offset=".5" stop-color="#505858"/><stop offset=".65" stop-color="#566060"/><stop offset="1" stop-color="#6d7979"/></linearGradient>
                    <linearGradient id="body" gradientUnits="userSpaceOnUse" x1="901" y1="0" x2="1204" y2="0"><stop offset="0" stop-color="#7b888b"/><stop offset=".03" stop-color="#616c6c"/><stop offset=".11" stop-color="#606a6a"/><stop offset=".13" stop-color="#74807f"/><stop offset=".4" stop-color="#4e5656"/><stop offset=".8" stop-color="#4f5757"/><stop offset="1" stop-color="#7e8b90"/></linearGradient>
                </defs>
                <!-- sheet coordinates start at the window corner -->
                <g transform="translate(-234 -119)">
                    <path class="border-dash" d="M264.500 915V197.500H2400"/>
                    <path class="frame" d="M342.500 251.500h418v272h-418zM342.500 640.500h418v200h-418zM886.500 542.500h418v298h-418z"/>

                    <!-- top view -->
                    <g class="edge">
                        <path d="M491 283A121 121 0 0 1 612 283L721 345.500A48.500 48.500 0 0 1 721 429.500L612 492A121 121 0 0 1 491 492L382 429.500A48.500 48.500 0 0 1 382 345.500Z"/>
                        <circle cx="551.500" cy="387.500" r="72.700"/>
                        <circle cx="551.500" cy="387.500" r="48.500"/>
                        <circle cx="406" cy="387.500" r="24.300"/>
                        <circle cx="697" cy="387.500" r="24.300"/>
                    </g>
                    <path class="center" d="M467 387.500h32M504 387.500h4M513 387.500h77M595 387.500h4M604 387.500h32M551.500 303v32M551.500 340v4M551.500 349v77M551.500 430v4M551.500 439v33"/>
                    <g class="dim">
                        <path d="M446 229.500h12L515 325"/>
                        <path d="M515 325L589 449" marker-start="url(#arrow)" marker-end="url(#arrow)"/>
                        <path d="M374 305.500h47L510 361"/>
                        <path d="M510 361L593 412.500" marker-start="url(#arrow)" marker-end="url(#arrow)"/>
                        <path d="M747 304.500h-11L707 366"/>
                        <path d="M707 366L688 409" marker-start="url(#arrow)" marker-end="url(#arrow)"/>
                        <path d="M708 412L718 432" marker-end="url(#arrow)"/>
                        <path d="M718 432l8 17.500h38"/>
                        <path d="M593 478L602 497" marker-end="url(#arrow)"/>
                        <path d="M602 497l8 17.500h37"/>
                        <path d="M406.500 387v174M697.500 387v174"/>
                        <path d="M407 556.500h290" marker-start="url(#arrow)" marker-end="url(#arrow)"/>
                    </g>
                    <g class="dim-text">
                        <text x="410" y="234">Ø</text><text x="425" y="234">60</text>
                        <text x="376" y="302">Ø</text><text x="391" y="302">40</text>
                        <text x="754" y="309">Ø</text><text x="769" y="309">20.0</text>
                        <text x="736" y="449">R20</text>
                        <text x="620" y="514">R50</text>
                        <text x="539" y="553">120</text>
                        <text transform="translate(410 713) rotate(-90)">40</text>
                        <text transform="translate(325 798) rotate(-90)">30</text>
                    </g>

                    <!-- front view -->
                    <path class="edge" d="M357 753h389v73H357zM479 753v-98h145v98"/>
                    <path class="edge thin" d="M381.500 753v73M490.500 753v73M612.500 753v73M721.500 753v73"/>
                    <path class="edge hidden" d="M430.500 755v70M502.500 655v170M600.500 657v168M672.500 755v70"/>
                    <path class="center" d="M551.500 639v57M551.500 700v7M551.500 711v57"/>
                    <g class="dim">
                        <path d="M409 655.500h70M324 752.500h33M324 825.500h33"/>
                        <path d="M413.500 656v97" marker-start="url(#arrow)" marker-end="url(#arrow)"/>
                        <path d="M328.500 753v72" marker-start="url(#arrow)" marker-end="url(#arrow)"/>
                    </g>

                    <!-- isometric view -->
                    <g class="solid">
                        <path fill="url(#body)" d="M901 617V680Q901 684 903 688L935 754C944 778 970 796 1008 805L1133 823Q1152 827 1169 825C1188 822 1204 812 1204 798V738L1100 640Z"/>
                        <path fill="#cae1e8" d="M980 595Q964 591 948 591C918 591 899 604 902 620L935 693C946 718 973 737 1011 744L1143 765C1174 770 1204 757 1204 740Q1204 735 1202 731L1168 657Q1156 632 1126 623L1052 600Z"/>
                        <path class="facet" d="M903.500 625v62M935.500 693v61M1021.500 746v61M1145.500 766v58"/>
                        <ellipse fill="url(#bore)" cx="950" cy="619" rx="24.500" ry="14.500"/>
                        <ellipse fill="url(#bore)" cx="1155" cy="738" rx="24.500" ry="14.500"/>
                        <path fill="url(#boss)" d="M980 599v81A73 41 0 0 0 1125.500 680V599z"/>
                        <ellipse fill="#cae1e8" cx="1052.700" cy="599" rx="72.800" ry="41.500"/>
                        <ellipse fill="url(#bore)" cx="1052.700" cy="599.500" rx="49" ry="28.500"/>
                    </g>
                    <path class="axis" d="M1052.500 584v46M1052.500 634v4M1052.500 642v51"/>
                </g>
            </svg>
            <p class="sheet-label">Sheet "Sheet 1" Work</p>
        </section>
    </main>

    <div class="toolrow bottom">
        <div class="toolbar">
            <span class="grip"></span>
            <label class="combo sheet"><select class="latin" aria-label="图纸页"><option>Sheet 1</option></select><i></i></label>
            <button class="tool" aria-label="轮廓"><svg class="icon" viewBox="0 0 16 16"><path d="M1 2v10h5V4h3q0 7 1 7 5 0 5-4t-4-4H9" fill="none" stroke="#333" stroke-width="1.300"/><path d="M0 11h3v3H0zM5 11h3v3H5zM9 9h3v3H9z" fill="#c02c38"/></svg></button>
            <button class="tool" aria-label="直线"><svg class="icon" viewBox="0 0 16 16"><path d="M2 14L14 2" stroke="#222" stroke-width="1.300"/><path d="M1 13h3v3H1zM12 1h3v3h-3z" fill="#c02c38"/></svg></button>
            <button class="tool" aria-label="圆弧"><svg class="icon" viewBox="0 0 16 16"><path d="M2 4q9 0 11 10" fill="none" stroke="#7a2a60" stroke-width="1.300"/><path d="M1 3h3v3H1zM8 5h3v3H8zM11 12h3v3h-3z" fill="#c02c38"/></svg></button>
            <button class="tool" aria-label="圆"><svg class="icon" viewBox="0 0 16 16"><circle cx="8" cy="8" r="6.500" fill="none" stroke="#222" stroke-width="1.300"/></svg></button>
            <button class="tool" aria-label="派生直线"><svg class="icon" viewBox="0 0 16 16"><path d="M0 1.500h15M4 4.500h11M2.500 1v14M3 2l12 13" fill="none" stroke="#333" stroke-width="1.200"/></svg></button>
            <button class="tool" aria-label="快速修剪"><svg class="icon" viewBox="0 0 16 16"><path d="M1 4l9 10M6 7l-3 7" stroke="#999" stroke-width="1.400"/><path d="M6 9l7-7 2 3-6 5z" fill="#a5a5a5"/></svg></button>
            <button class="tool" aria-label="快速延伸"><svg class="icon" viewBox="0 0 16 16"><path d="M1 3l6 8-1 4M7 11l3-3" fill="none" stroke="#999" stroke-width="1.400"/><path d="M7 9l7-7 2 3-6 5z" fill="#a5a5a5"/></svg></button>
            <button class="tool" aria-label="拐角"><svg class="icon" viewBox="0 0 16 16"><path d="M1 8h14M8 1l3 14M4 4l4 4" fill="none" stroke="#aaa"/></svg></button>
            <button class="tool" aria-label="圆角"><svg class="icon" viewBox="0 0 16 16"><path d="M1 2.500h7q6 0 6 6V15" fill="none" stroke="#999" stroke-width="1.300"/></svg></button>
            <button class="tool" aria-label="矩形"><svg class="icon" viewBox="0 0 16 16"><path d="M1.500 3.500h13v9h-13z" fill="none" stroke="#333" stroke-width="1.300"/><path d="M0 2h3v3H0zM13 11h3v3h-3z" fill="#c02c38"/></svg></button>
            <button class="tool" aria-label="样条"><svg class="icon" viewBox="0 0 16 16"><path d="M1 11q2-7 5-3t5 3 4-3M7 8l1-6" fill="none" stroke="#444" stroke-width="1.300"/><path d="M0 8h3v3H0zM6 1h3v3H6zM9 10h3v3H9zM13 6h3v3h-3z" fill="#b04c54"/></svg></button>
            <button class="tool" aria-label="点"><svg class="icon" viewBox="0 0 16 16"><path d="M1 8h14M8 1v14" stroke="#111" stroke-width="1.600"/></svg></button>
            <span class="sep"></span>
            <button class="tool" aria-label="约束"><svg class="icon" viewBox="0 0 16 16"><path d="M1 10l5-8M4 12l5-8M8 13.500h7M11.500 8v5" stroke="#999" stroke-width="1.200"/></svg></button>
            <button class="tool" aria-label="自动约束"><svg class="icon" viewBox="0 0 16 16"><path d="M2 14l9-12v3l-2 4M1 14.500h14M6 10q4 0 5 4" fill="none" stroke="#999" stroke-width="1.500"/><path d="M6 10l4 4H4z" fill="#b09c9c"/></svg></button>
            <button class="tool" aria-label="显示约束"><svg class="icon" viewBox="0 0 16 16"><path d="M0 5l5 3-5 3z" fill="#b09a9a"/><path d="M6 9l8-8M7 13.500h8M11 8v5" stroke="#999" stroke-width="1.400"/></svg></button>
            <button class="tool" aria-label="删除约束"><svg class="icon" viewBox="0 0 16 16"><path d="M1 4l13 11M13 6L3 15" stroke="#888" stroke-width="2"/><path d="M6 5l8-4" stroke="#a8a8a8" stroke-width="2"/></svg></button>
            <button class="tool" aria-label="镜像"><svg class="icon" viewBox="0 0 16 16"><path d="M1 2h3v12H1zM12 2h3v12h-3z" fill="#d0c6c6" stroke="#a09090"/><path d="M5 4l5 8M10 3v10" stroke="#999"/></svg></button>
            <button class="tool" aria-label="转换参考"><svg class="icon" viewBox="0 0 16 16"><path d="M1 7h6v7H1zM9 3h5v11H9zM4 6l3-4 5 1" fill="#ccc" stroke="#999"/></svg></button>
            <button class="tool" aria-label="创建约束"><svg class="icon" viewBox="0 0 16 16"><path d="M3 2h10L5 8h6" fill="none" stroke="#3358c0" stroke-width="1.400"/><path d="M1 14.500h15M3 14l6-7 4 7M8 2v8" fill="none" stroke="#222" stroke-width="1.200"/><path d="M3 9l8-7" stroke="#cbcf48"/></svg></button>
            <button class="tool" aria-label="备选解"><svg class="icon" viewBox="0 0 16 16"><path d="M3 1l5 2-1 4 3 1-8 5 3-5-3-1z" fill="#aaa89a"/><path d="M9 13.500h7M12 7l3 6" stroke="#999" stroke-width="1.500"/></svg></button>
            <span class="sep"></span>
            <button class="tool" aria-label="添加曲线"><svg class="icon" viewBox="0 0 16 16"><path d="M3 0v6M0 3h6" stroke="#d01c28" stroke-width="2"/><circle cx="12" cy="6" r="3.500" fill="none" stroke="#333"/><path d="M1 10.500h8v4H1z" fill="none" stroke="#333" stroke-width="1.300"/></svg></button>
            <button class="tool" aria-label="投影曲线"><svg class="icon" viewBox="0 0 16 16"><path d="M3 0v6M0 3h6" stroke="#d01c28" stroke-width="2"/><path d="M4 6h4v9H4zM9 7l6 2v6l-6-2z" fill="#8fb0f4" stroke="#3556c0"/><path d="M11 11l4-3v5z" fill="#c04c40"/></svg></button>
            <button class="tool" aria-label="偏置曲线"><svg class="icon" viewBox="0 0 16 16"><path d="M1 14V6q0-5 6-5 5 0 5 4l4 4-2 5z" fill="#ecd0d0" stroke="#a03640" stroke-width="1.300"/><path d="M4 11V7q1-3 4-2l1 3 3 1-1 2z" fill="none" stroke="#555"/></svg></button>
            <button class="tool" aria-label="编辑曲线"><svg class="icon" viewBox="0 0 16 16"><path d="M1 1h4v7H1zM11 1h4v7h-4zM1 9h14v5H1zM8 1v13" fill="none" stroke="#aaa" stroke-width="1.300"/><circle cx="5" cy="11" r="2" fill="none" stroke="#aaa"/><circle cx="11" cy="11" r="2" fill="none" stroke="#aaa"/></svg></button>
            <button class="drop more" aria-label="更多"></button>
        </div>
        <div class="toolbar gap-xl">
            <span class="grip"></span>
            <button class="tool" aria-label="编辑定义"><svg class="icon" viewBox="0 0 16 16"><path d="M1 3h8v5H1zM9 9h6v5H9z" fill="#b4b4ac" stroke="#888"/><path d="M2 9v5h6M8 9l6-8" fill="none" stroke="#929286" stroke-width="2"/></svg></button>
            <button class="tool" aria-label="添加定义"><svg class="icon" viewBox="0 0 16 16"><path d="M1 3h14v5H4M2 9v5h4v-4" fill="none" stroke="#999" stroke-width="1.400"/><path d="M7 9l7-8" stroke="#a3a38c" stroke-width="2.400"/></svg></button>
            <button class="drop more" aria-label="更多"></button>
        </div>
    </div>

    <div class="toolrow bottom">
        <div class="toolbar open">
            <label class="combo filter"><select aria-label="类型过滤器"><option></option></select><i></i></label>
            <label class="combo scope"><select aria-label="选择范围"><option>整个装配</option></select><i></i></label>
            <button class="tool" aria-label="组件"><svg class="icon" viewBox="0 0 16 16"><path d="M1 4l4-2v10l4 1-3 2-5-3z" fill="#8d8d8d"/><circle cx="11" cy="5" r="3" fill="none" stroke="#929292" stroke-width="2"/><circle cx="12" cy="11" r="3" fill="none" stroke="#929292" stroke-width="2"/></svg></button>
            <span class="sep"></span>
            <button class="tool" aria-label="捕捉过滤器"><svg class="icon" viewBox="0 0 16 16"><path d="M.5.500h15v15H.5z" fill="#eee2da" stroke="#b83c3c" stroke-width="1.300"/><circle cx="6" cy="6" r="3" fill="none" stroke="#555"/><path d="M1 6h10M6 1v10" stroke="#222"/><path d="M7 8h8l-3 3v4l-2-2v-2z" fill="#f7d848" stroke="#a58a1c" stroke-width=".6"/></svg></button>
            <button class="drop slim" aria-label="展开"></button>
            <button class="tool" aria-label="返回"><svg class="icon" viewBox="0 0 16 16"><path d="M1 9l5-4v3q6 1 6-4 5 8-6 8v2z" fill="#2c9090" stroke="#1f6c70" stroke-width=".5"/></svg></button>
            <button class="tool pressed" aria-label="实体"><svg class="icon" viewBox="0 0 16 16"><path d="M1 9l6-6h4l4 4v4l-5 3-9-2z" fill="#e5e5f4" stroke="#444"/><path d="M1 9l8 1 6-3M9 10v4M5 6l6 1" fill="none" stroke="#8c4a5c"/></svg></button>
            <button class="tool" aria-label="撤消点"><svg class="icon" viewBox="0 0 16 16"><path d="M1 5q4-5 7 0v3" fill="none" stroke="#999" stroke-width="2"/><circle cx="11" cy="11" r="3" fill="none" stroke="#999"/><path d="M6 11h10M11 6v10" stroke="#999"/></svg></button>
            <button class="tool" aria-label="过滤"><svg class="icon" viewBox="0 0 16 16"><path d="M0 4l4-3h6l3 3h3v3l-3 1v6h-3V8L6 5v3L2 7z" fill="#979797"/></svg></button>
            <span class="sep"></span>
            <button class="tool" aria-label="矩形选择"><svg class="icon" viewBox="0 0 16 16"><path d="M1.500 2.500h13v11h-13z" fill="none" stroke="#222" stroke-width="1.300" stroke-dasharray="2 1"/><path d="M0 1h3v3H0zM13 12h3v3h-3z" fill="#c02c38"/></svg></button>
            <button class="drop" aria-label="展开"></button>
            <span class="sep"></span>
            <button class="tool pressed" aria-label="启用捕捉点"><svg class="icon" viewBox="0 0 16 16"><path d="M0 1l4 3-4 3z" fill="#18a02c"/><path d="M0 9l4 3-4 3z" fill="#d02020"/><circle cx="10" cy="9" r="2.500" fill="#f5c838"/><g fill="#fff" stroke="#222" stroke-width="1.300"><circle cx="10" cy="4" r="1.500"/><circle cx="10" cy="14" r="1.500"/><circle cx="5.500" cy="9" r="1.500"/><circle cx="14" cy="9" r="1.500"/></g></svg></button>
            <button class="tool pressed" aria-label="端点"><svg class="icon" viewBox="0 0 16 16"><path d="M2 14L14 2" stroke="#222" stroke-width="1.300"/><circle cx="13" cy="3" r="2" fill="#c02020"/></svg></button>
            <button class="tool pressed" aria-label="中点"><svg class="icon" viewBox="0 0 16 16"><path d="M2 14L14 2" stroke="#222" stroke-width="1.300"/><circle cx="8" cy="8" r="2.200" fill="#c02020"/></svg></button>
            <button class="tool" aria-label="控制点"><svg class="icon" viewBox="0 0 16 16"><path d="M1 2q6-1 6 6t7 6" fill="none" stroke="#222" stroke-width="1.300"/><circle cx="7" cy="8" r="2" fill="#c02020"/></svg></button>
            <button class="tool" aria-label="交点"><svg class="icon" viewBox="0 0 16 16"><path d="M1 10q7-8 14 0M8 1v14" fill="none" stroke="#222" stroke-width="1.300"/><circle cx="8" cy="6" r="2" fill="#c02020"/></svg></button>
            <button class="tool pressed" aria-label="圆心"><svg class="icon" viewBox="0 0 16 16"><circle cx="8" cy="8" r="6.500" fill="none" stroke="#222" stroke-width="1.200"/><circle cx="8" cy="8" r="1.500" fill="#c02020"/></svg></button>
            <button class="tool" aria-label="象限点"><svg class="icon" viewBox="0 0 16 16"><circle cx="8" cy="8" r="6" fill="none" stroke="#222" stroke-width="1.200"/><g fill="#c02020"><circle cx="8" cy="2" r="1.800"/><circle cx="8" cy="14" r="1.800"/><circle cx="2" cy="8" r="1.800"/><circle cx="14" cy="8" r="1.800"/></g></svg></button>
            <button class="tool pressed" aria-label="现有点"><svg class="icon" viewBox="0 0 16 16"><path d="M2 8.500h12M8.500 2v12" stroke="#a03c3c" stroke-width="1.400"/></svg></button>
            <button class="tool" aria-label="曲线上的点"><svg class="icon" viewBox="0 0 16 16"><path d="M2 15L14 2" stroke="#6a2c2c" stroke-width="1.400"/><circle cx="4" cy="12" r="1.800" fill="#b02828"/></svg></button>
            <button class="tool" aria-label="面上的点"><svg class="icon" viewBox="0 0 16 16"><path d="M1 8q3-7 13-7l-1 5 2 1q-4 2-4 8-8 0-10-7" fill="#bcd0fa" stroke="#3c64c0" stroke-width="1.500"/><circle cx="9" cy="4" r="2" fill="#c02020"/></svg></button>
            <span class="sep"></span>
            <button class="tool" aria-label="着色实体"><svg class="icon" viewBox="0 0 16 16"><use href="#cube"/></svg></button>
        </div>
    </div>
</body>
</html>
```

FILE: styles.css
```css
* {
    box-sizing: border-box;
}
body {
    margin: 0;
    height: 100vh;
    display: flex;
    flex-direction: column;
    overflow: hidden;
    background: #d4d4d4;
    color: #222;
    font-family: "Liberation Sans", "Noto Sans CJK SC", sans-serif;
    font-size: 11px;
    line-height: 16px;
}
button, select {
    font: inherit;
    color: inherit;
    background: none;
    border: 0;
    padding: 0;
    margin: 0;
}
button {
    flex: none;
    cursor: pointer;
}
.defs {
    position: absolute;
    width: 0;
    height: 0;
}
.icon {
    width: 16px;
    height: 16px;
    flex: none;
    display: block;
}
.latin {
    font-family: "Liberation Mono", monospace;
    font-size: 10px;
}
.han {
    font-family: "Noto Sans CJK SC", sans-serif;
    font-size: 11px;
    line-height: 12px;
}
.glyph {
    font: bold 12px "Liberation Serif", serif;
}
.glyph-s {
    font: bold 8px "Liberation Sans", sans-serif;
    fill: #2a3a80;
}

/* title bar */
.titlebar {
    flex: none;
    height: 26px;
    display: flex;
    align-items: center;
    padding-left: 2px;
    background: linear-gradient(#b0b4b4 0, #777 2px, #4c4e4e 8px, #1c1c1c 8px, #1c1c1c 25px, #000 25px);
    color: #fff;
}
.titlebar h1 {
    margin: 0 auto 0 4px;
    font: bold 13px/18px "Open Sans", sans-serif;
}
.brand {
    font: 800 14px/18px "Open Sans", sans-serif;
    margin-right: 29px;
}
.minimize {
    width: 11px;
    height: 20px;
    align-self: flex-start;
    border: 1px solid #888;
    border-right: 0;
    border-radius: 3px 0 0 3px;
    background: linear-gradient(#fff, #fff) 4px 12px / 7px 3px no-repeat, #444;
}

/* menus and toolbars */
.menubar {
    flex: none;
    height: 23px;
    display: flex;
    align-items: center;
    background: linear-gradient(#ececec, #dedede);
    border-bottom: 1px solid #c4c4c4;
}
.menubar .icon {
    margin-right: 7px;
}
.menubar button {
    margin-right: 13px;
    white-space: nowrap;
}
.toolrow {
    flex: none;
    height: 26px;
    display: flex;
    background: linear-gradient(#dcdcdc, #cfcfcf);
    overflow: hidden;
}
.toolbar {
    flex: none;
    display: flex;
    align-items: center;
    border-right: 1px solid #bdbdbd;
    background: linear-gradient(#e2e2e2, #cdcdcd);
    border-top: 1px solid #ececec;
}
.toolbar.open {
    border-right: 0;
    background: none;
}
.gap-s {
    margin-left: 3px;
}
.gap-m {
    margin-left: 30px;
}
.gap-m2 {
    margin-left: 40px;
}
.gap-l {
    margin-left: 75px;
}
.gap-xl {
    margin-left: 178px;
}
.grip {
    flex: none;
    width: 3px;
    height: 17px;
    margin: 0 1px 0 3px;
    background: repeating-linear-gradient(#fafafa 0 2px, #aaa 2px 3px, transparent 3px 4px);
}
.tool {
    width: 23px;
    height: 22px;
    display: flex;
    align-items: center;
    justify-content: center;
}
.tool.narrow {
    width: 22px;
}
.tool.pressed {
    background: #fff;
    border: 1px solid #555;
    border-radius: 3px;
}
.start {
    display: flex;
    align-items: center;
    gap: 4px;
    width: 58px;
    padding-left: 3px;
}
.caret, .drop::after {
    content: "";
    border: 3px solid transparent;
    border-top: 4px solid #111;
    border-bottom: 0;
}
.caret {
    margin-left: -1px;
}
.drop {
    width: 12px;
    height: 22px;
    display: flex;
    align-items: center;
    justify-content: center;
}
.drop.more {
    align-items: flex-end;
    padding-bottom: 3px;
}
.drop.wide {
    width: 14px;
}
.drop.slim {
    width: 8px;
}
.sep {
    flex: none;
    width: 2px;
    height: 24px;
    margin: 0 2px;
    background: linear-gradient(90deg, #b8b8b8 50%, #f4f4f4 50%);
}

/* strip under the toolbars */
.dockstrip {
    flex: none;
    height: 17px;
    display: flex;
    background: linear-gradient(#c2c2c2 0, #d4d4d4 13px, #6e6e6e 13px, #6e6e6e 14px, #bbb 14px, #bbb 15px, #666 15px, #666 16px, #eee 16px);
}
.rail {
    flex: 1;
    height: 5px;
    margin: 4px 0 0 4px;
    border-top: 2px solid #969696;
    border-bottom: 1px solid #f6f6f6;
}
.collapse {
    width: 20px;
    height: 18px;
    display: flex;
    align-items: center;
    justify-content: center;
    background: linear-gradient(#f4f4f4, #cfcfcf);
    border: 1px solid #888;
    z-index: 1;
}
.strip-end {
    width: 16px;
    height: 18px;
    background: linear-gradient(#666 0, #444 6px, #1c1c1c 6px);
    z-index: 1;
}

/* resource bar */
.workspace {
    flex: 1;
    min-height: 0;
    display: flex;
}
.resources {
    flex: none;
    width: 27px;
    padding-top: 14px;
    display: flex;
    flex-direction: column;
    align-items: flex-end;
    gap: 2px;
    background: linear-gradient(90deg, #b4b4b4, #a8a8a8);
}
.tab {
    width: 22px;
    height: 32px;
    padding-left: 3px;
    border: 1px solid #777;
    border-right: 0;
    border-radius: 4px 0 0 4px;
    background: linear-gradient(90deg, #d8d8d8, #bcbcbc);
    overflow: hidden;
}
.tab.active {
    width: 24px;
    height: 35px;
    margin: -1px 0;
    background: #ececec;
}
.tab.spaced {
    margin-top: 12px;
}

/* navigator panel */
.panel {
    flex: none;
    width: 203px;
    padding: 4px 10px 4px 6px;
    display: flex;
    flex-direction: column;
    background: #ececec;
}
.panel-head {
    display: flex;
    align-items: center;
    gap: 5px;
    padding-left: 3px;
}
.panel-head .icon {
    width: 15px;
}
.panel-head h2 {
    flex: 1;
    margin: 0;
    padding: 2px 5px;
    font-size: 12px;
    line-height: 18px;
    background: linear-gradient(#f6f6f6, #cfcfcf);
    border: solid #999;
    border-width: 0 1px 1px 0;
}
.tree {
    flex: 1;
    min-height: 0;
    margin-top: 3px;
    display: flex;
    flex-direction: column;
    border: 1px solid #5a5a5a;
    background: #fff;
}
.tree-head {
    flex: none;
    height: 16px;
    padding-left: 7px;
    display: flex;
    align-items: center;
    gap: 14px;
    background: linear-gradient(#f2f2f2, #cfcfcf);
    border-bottom: 1px solid #aaa;
}
.sort {
    border: 5px solid transparent;
    border-bottom: 6px solid #111;
    border-top: 0;
}
.rows {
    flex: 1;
    min-height: 0;
    margin: 0;
    padding: 0;
    list-style: none;
    overflow: hidden;
    background: repeating-linear-gradient(#fff 0 19px, #e2e2e2 19px 20px, #f6f6f6 20px 39px, #e2e2e2 39px 40px);
}
.rows li {
    height: 20px;
    display: flex;
    align-items: center;
    padding-left: 1px;
}
.name {
    margin-left: 3px;
    white-space: pre;
}
.faded {
    color: #a4a4a4;
}
.cell {
    --v: repeating-linear-gradient(#999 0 1px, transparent 1px 2px);
    --h: repeating-linear-gradient(90deg, #999 0 1px, transparent 1px 2px);
    flex: none;
    width: 19px;
    height: 20px;
    display: flex;
    align-items: center;
    padding-left: 4px;
}
.line {
    background: var(--v) 8px 0 / 1px 20px no-repeat;
}
.tee {
    background: var(--v) 8px 0 / 1px 20px no-repeat, var(--h) 8px 10px / 10px 1px no-repeat;
}
.tee.first {
    background: var(--v) 8px 10px / 1px 10px no-repeat, var(--h) 8px 10px / 10px 1px no-repeat;
}
.elbow {
    background: var(--v) 8px 0 / 1px 10px no-repeat, var(--h) 8px 10px / 10px 1px no-repeat;
}
.expander {
    width: 9px;
    height: 9px;
    border: 1px solid #777;
    border-radius: 2px;
    background: linear-gradient(#111, #111) 1px 3px / 5px 1px no-repeat, #fff;
}
.expander.plus {
    background: linear-gradient(#111, #111) 1px 3px / 5px 1px no-repeat, linear-gradient(#111, #111) 3px 1px / 1px 5px no-repeat, #fff;
}
.rows input {
    appearance: none;
    flex: none;
    width: 12px;
    height: 12px;
    margin: 0 2px;
    border: 1px solid #222;
    background: #fff;
    display: grid;
}
.rows input:checked::before {
    content: "";
    background: #15b03a;
    clip-path: polygon(0% 45%, 25% 38%, 42% 58%, 85% 0%, 100% 12%, 45% 100%);
}
.scrollbar {
    flex: none;
    height: 17px;
    display: flex;
    background: #f6f6f3;
}
.scrollbar button {
    width: 17px;
    display: flex;
    align-items: center;
    justify-content: center;
    border: 1px solid #8f9cc0;
    background: linear-gradient(#fff, #c3cff0);
}
.scrollbar button:last-child {
    margin-left: auto;
}
.thumb {
    width: 80px;
    display: flex;
    align-items: center;
    justify-content: center;
    border: 1px solid #6f80b4;
    background: linear-gradient(#dfe6fa, #b9c6e8);
}
.thumb i {
    width: 8px;
    height: 7px;
    background: repeating-linear-gradient(90deg, #5c6a94 0 1px, transparent 1px 2px);
}
.splitter {
    flex: none;
    height: 13px;
    display: flex;
    align-items: center;
    justify-content: center;
    background: linear-gradient(#aaa, #aaa) 0 6px / 100% 1px no-repeat;
}
.splitter span {
    width: 40px;
    height: 6px;
    border: solid #ececec;
    border-width: 0 4px;
    background: #ccc;
    box-shadow: inset 0 -1px #888;
}
.section {
    height: 22px;
    padding-left: 7px;
    display: flex;
    align-items: center;
    justify-content: space-between;
    font-size: 12px;
    font-weight: bold;
    background: linear-gradient(#f6f6f6, #d2d2d2);
    border: solid #999;
    border-width: 0 1px 1px;
}
.chevron {
    width: 21px;
    align-self: stretch;
    display: flex;
    align-items: center;
    justify-content: center;
    border-left: 1px solid #999;
}

/* drawing sheet */
.canvas {
    flex: 1;
    min-width: 0;
    display: grid;
    border-left: 4px double #777;
    border-top: 1px solid #999;
    background: #d3d4d6;
    overflow: hidden;
}
.drawing {
    grid-area: 1 / 1;
    width: 100%;
    height: 100%;
}
.sheet-label {
    grid-area: 1 / 1;
    align-self: end;
    margin: 0 3px;
    font: 500 15px/18px Roboto, sans-serif;
    color: #f59a3e;
}
.border-dash, .frame, .center, .edge, .dim {
    fill: none;
    stroke-width: 1px;
}
.border-dash {
    stroke: #777;
    stroke-dasharray: 8 8;
}
.frame, .center {
    stroke: #7a7b7d;
}
.edge {
    stroke: #345d96;
    stroke-width: 2px;
}
.edge.thin {
    stroke-width: 1px;
}
.edge.hidden {
    stroke-width: 1px;
    stroke-dasharray: 8 8;
}
.dim {
    stroke: #96602c;
}
.dim-text {
    font: 200 14px "DejaVu Sans", sans-serif;
    fill: #733c08;
}
.solid {
    stroke: #345d96;
    stroke-width: 2px;
}
.facet {
    stroke: #41618a;
    stroke-width: 1px;
}
.axis {
    stroke: #9aa0a2;
}

/* bottom bars */
.toolrow.bottom {
    height: 28px;
    border-top: 1px solid #777;
}
.combo {
    display: grid;
    height: 16px;
    border: 1px solid #56616c;
    border-radius: 3px;
    background: #fff;
    overflow: hidden;
}
.combo select {
    grid-area: 1 / 1;
    appearance: none;
    padding-left: 2px;
    line-height: 14px;
}
.combo select.latin {
    font-family: "Liberation Mono", monospace;
    font-size: 10px;
}
.combo i {
    grid-area: 1 / 1;
    justify-self: end;
    width: 17px;
    display: flex;
    align-items: center;
    justify-content: center;
    background: linear-gradient(#d8ecff, #5a9ae4);
    pointer-events: none;
}
.combo i::after {
    content: "";
    border: 5px solid transparent;
    border-top: 6px solid #111;
    border-bottom: 0;
}
.combo.sheet {
    width: 81px;
    margin: 0 4px 0 3px;
}
.combo.filter {
    width: 110px;
    margin-left: 5px;
}
.combo.scope {
    width: 117px;
    margin: 0 4px 0 9px;
}
```
